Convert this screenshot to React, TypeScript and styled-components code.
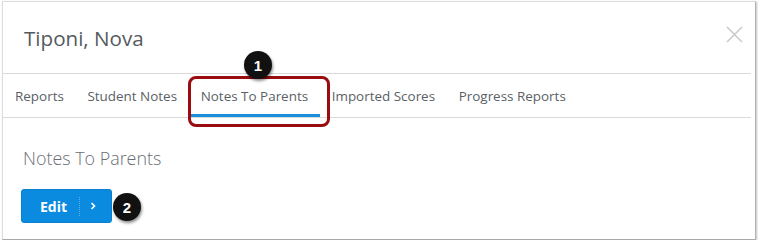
import React from 'react';
import styled, { createGlobalStyle } from 'styled-components';

const GlobalStyle = createGlobalStyle`
  html, body {
    margin: 0;
    padding: 0;
    background: #ffffff;
  }
  body {
    font-family: "Open Sans", "Noto Sans", sans-serif;
    -webkit-font-smoothing: antialiased;
  }
`;

const Frame = styled.div`
  position: relative;
  box-sizing: border-box;
  margin: 1px 0 0 2px;
  width: 754px;
  height: 239px;
  background: #ffffff;
  border: 1px solid #dcdcdc;
  border-right-color: #b4b4b4;
  border-bottom-color: #a8a8a8;
  box-shadow: 1px 1px 2px rgba(0, 0, 0, 0.25);
  display: flex;
  flex-direction: column;
`;

const Header = styled.header`
  height: 71px;
  display: flex;
  align-items: flex-start;
  justify-content: space-between;
  padding: 0 12px 0 21px;
`;

const Title = styled.h1`
  margin: 22px 0 0;
  font-size: 20.6px;
  font-weight: 400;
  color: #555a60;
`;

const CloseButton = styled.button`
  margin-top: 24px;
  width: 17px;
  height: 17px;
  padding: 0;
  border: 0;
  background: none;
  display: flex;
  svg {
    display: block;
  }
`;

const TabBar = styled.nav`
  display: flex;
  margin-right: 4px;
  height: 43px;
  border-top: 1px solid #dadada;
  border-bottom: 1px solid #dadada;
`;

const Tab = styled.div<{ $active?: boolean }>`
  display: flex;
  align-items: center;
  padding: 1px 11.6px 0 12px;
  font-size: 13.45px;
  color: #5a5f66;
  box-shadow: ${(p) => (p.$active ? 'inset 0 -3px 0 #1a8fdc' : 'none')};
`;

const Body = styled.section`
  padding: 28px 0 0 18px;
`;

const Heading = styled.h2`
  margin: 0;
  padding-left: 2px;
  font-size: 17.9px;
  font-weight: 300;
  color: #6a6e74;
`;

const EditButton = styled.button`
  margin-top: 19px;
  box-sizing: border-box;
  width: 91px;
  height: 34px;
  display: flex;
  align-items: center;
  padding: 0;
  border: 1px solid #0a7fd0;
  border-radius: 3px;
  background: #0b8be0;
  color: #ffffff;
  font-family: "Open Sans", "Noto Sans", sans-serif;
  font-weight: 700;
  font-size: 14px;
  cursor: pointer;
`;

const EditLabel = styled.span`
  box-sizing: border-box;
  width: 57px;
  padding-left: 18px;
  text-align: left;
`;

const Divider = styled.span`
  width: 0;
  height: 19px;
  border-left: 1px dotted rgba(255, 255, 255, 0.35);
`;

const Chevron = styled.span`
  flex: 1;
  display: flex;
  justify-content: center;
  padding-right: 5px;
`;

const Callout = styled.div<{ $x: number; $y: number }>`
  position: absolute;
  left: ${(p) => p.$x}px;
  top: ${(p) => p.$y}px;
  width: 136px;
  height: 45px;
  border: 3px solid #9a0c10;
  border-radius: 8px;
`;

const Badge = styled.div<{ $x: number; $y: number }>`
  position: absolute;
  left: ${(p) => p.$x}px;
  top: ${(p) => p.$y}px;
  width: 28px;
  height: 28px;
  border-radius: 50%;
  background: #111111;
  box-shadow: 1px 2px 3px rgba(0, 0, 0, 0.45);
  color: #ffffff;
  font-family: "Liberation Sans", Arial, sans-serif;
  font-weight: 700;
  font-size: 15px;
  display: flex;
  align-items: center;
  justify-content: center;
`;

const tabs = ['Reports', 'Student Notes', 'Notes To Parents', 'Imported Scores', 'Progress Reports'];

export default function App() {
  return (
    <>
      <GlobalStyle />
      <Frame>
        <Header>
          <Title>Tiponi, Nova</Title>
          <CloseButton aria-label="Close">
            <svg width="17" height="17" viewBox="0 0 17 17">
              <path d="M1 1 L16 16 M16 1 L1 16" stroke="#c9c9c9" strokeWidth="1.5" />
            </svg>
          </CloseButton>
        </Header>
        <TabBar>
          {tabs.map((t) => (
            <Tab key={t} $active={t === 'Notes To Parents'}>
              {t}
            </Tab>
          ))}
        </TabBar>
        <Body>
          <Heading>Notes To Parents</Heading>
          <EditButton>
            <EditLabel>Edit</EditLabel>
            <Divider />
            <Chevron>
              <svg width="6" height="8" viewBox="0 0 6 8">
                <path d="M1.5 1 L4.5 4 L1.5 7" stroke="#ffffff" strokeWidth="1.6" fill="none" />
              </svg>
            </Chevron>
          </EditButton>
        </Body>
        <Callout $x={185} $y={74} />
        <Badge $x={241} $y={49}>1</Badge>
        <Badge $x={110} $y={191}>2</Badge>
      </Frame>
    </>
  );
}
